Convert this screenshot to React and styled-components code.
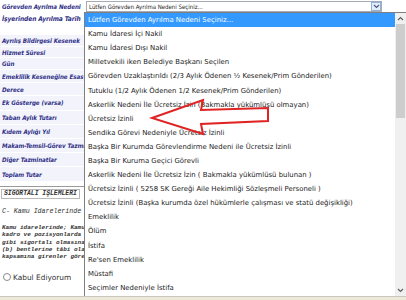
import React from "react";
import styled, { createGlobalStyle } from "styled-components";

const reasons = [
  "Lütfen Görevden Ayrılma Nedeni Seçiniz...",
  "Kamu İdaresi İçi Nakil",
  "Kamu İdaresi Dışı Nakil",
  "Milletvekili iken Belediye Başkanı Seçilen",
  "Görevden Uzaklaştırıldı (2/3 Aylık Ödenen ½ Kesenek/Prim Gönderilen)",
  "Tutuklu (1/2 Aylık Ödenen 1/2 Kesenek/Prim Gönderilen)",
  "Askerlik Nedeni İle Ücretsiz İzin (Bakmakla yükümlüsü olmayan)",
  "Ücretsiz İzinli",
  "Sendika Görevi Nedeniyle Ücretsiz İzinli",
  "Başka Bir Kurumda Görevlendirme Nedeni ile Ücretsiz İzinli",
  "Başka Bir Kuruma Geçici Görevli",
  "Askerlik Nedeni İle Ücretsiz İzin ( Bakmakla yükümlüsü bulunan )",
  "Ücretsiz İzinli ( 5258 SK Gereği Aile Hekimliği Sözleşmeli Personeli )",
  "Ücretsiz İzinli (Başka kurumda özel hükümlerle çalışması ve statü değişikliği)",
  "Emeklilik",
  "Ölüm",
  "İstifa",
  "Re'sen Emeklilik",
  "Müstafi",
  "Seçimler Nedeniyle İstifa",
];

const labels = [
  ["Ayrılış Bildirgesi Kesenek", 12],
  ["Hizmet Süresi", 11],
  ["Gün", 12],
  ["Emeklilik Keseneğine Esas", 13],
  ["Derece", 13],
  ["Ek Gösterge (varsa)", 14.5],
  ["Taban Aylık Tutarı", 14],
  ["Kıdem Aylığı Yıl", 14.3],
  ["Makam-Temsil-Görev Tazminatı", 14.3],
  ["Diğer Tazminatlar", 14.3],
  ["Toplam Tutar", 14.3],
];

const paragraph = [
  "Kamu idarelerinde; Kamu idarelerinde;",
  "kadro ve pozisyonlarda çalışanlardan",
  "gibi sigortalı olmasına rağmen",
  "(b) bentlerine tâbi olanlardan",
  "kapsamına girenler görevden ayrılan",
];

const App = () => (
  <>
    <Global />
    <Page>
      <Form>
        <TopRow>
          <Label>Görevden Ayrılma Nedeni</Label>
          <Select>
            <span>Lütfen Görevden Ayrılma Nedeni Seçiniz...</span>
            <SelectButton>
              <svg width="7" height="5" viewBox="0 0 7 5">
                <path d="M1 1l2.5 2.5L6 1" fill="none" stroke="#4a5a80" strokeWidth="1.2" />
              </svg>
            </SelectButton>
          </Select>
        </TopRow>
        <DateRow>
          <Label big>İşyerinden Ayrılma Tarih</Label>
        </DateRow>
        <Spacer />
        {labels.map(([text, h]) => (
          <Cell key={text} h={h}>
            <Label>{text}</Label>
          </Cell>
        ))}
        <Rule />
        <Section>SİGORTALI İŞLEMLERİ</Section>
        <SubTitle>C- Kamu İdarelerinde Çalışanlar</SubTitle>
        <Para>
          {paragraph.map((line) => (
            <div key={line}>{line}</div>
          ))}
        </Para>
        <Radio>
          <Circle />
          Kabul Ediyorum
        </Radio>
      </Form>
      <Footer />

      <List>
        <Options>
          {reasons.map((r, i) => (
            <Option key={r} selected={i === 0}>
              {r}
            </Option>
          ))}
        </Options>
        <Scrollbar>
          <ScrollArrow>
            <svg width="7" height="5" viewBox="0 0 7 5">
              <path d="M1 4l2.5-2.5L6 4" fill="none" stroke="#606060" strokeWidth="1.2" />
            </svg>
          </ScrollArrow>
          <Thumb />
          <Track />
          <ScrollArrow>
            <svg width="7" height="5" viewBox="0 0 7 5">
              <path d="M1 1l2.5 2.5L6 1" fill="none" stroke="#606060" strokeWidth="1.2" />
            </svg>
          </ScrollArrow>
        </Scrollbar>
      </List>

      <Arrow width="406" height="300" viewBox="0 0 406 300">
        <path
          d="M152 118 L203 100 L201 110 L268 108 L268 121 L201 124 L203 134 Z"
          fill="none"
          stroke="#e02424"
          strokeWidth="2"
          strokeLinejoin="miter"
        />
      </Arrow>
    </Page>
  </>
);

export default App;

const Global = createGlobalStyle`
  body {
    margin: 0;
    background: #fff;
    font-family: "DejaVu Sans", Tahoma, sans-serif;
  }
`;

const Page = styled.div`
  position: relative;
  width: 406px;
  height: 300px;
  overflow: hidden;
  background: #fff;
`;

const Form = styled.div`
  display: flex;
  flex-direction: column;
  height: 296px;
`;

const TopRow = styled.div`
  display: flex;
  align-items: center;
  height: 12px;
  gap: 2px;
`;

const Label = styled.div`
  width: 84px;
  box-sizing: border-box;
  flex: none;
  overflow: hidden;
  white-space: nowrap;
  font-family: "DejaVu Sans Condensed", "DejaVu Sans", Verdana, sans-serif;
  font-stretch: condensed;
  font-weight: bold;
  font-style: italic;
  font-size: ${(p) => (p.big ? "6.6px" : "6.2px")};
  letter-spacing: ${(p) => (p.big ? "-0.1px" : "-0.05px")};
  color: #2f2f86;
  padding-left: 2px;
`;

const Select = styled.div`
  width: 296px;
  height: 11px;
  box-sizing: border-box;
  border: 1px solid #a5acb5;
  display: flex;
  align-items: center;
  justify-content: space-between;
  padding-left: 2px;
  font-family: "DejaVu Sans Condensed", "Liberation Sans Narrow", Arial, sans-serif;
  font-stretch: condensed;
  font-size: 6px;
  color: #222;
  white-space: nowrap;
`;

const SelectButton = styled.div`
  width: 10px;
  height: 9px;
  box-sizing: border-box;
  border: 1px solid #8fb2da;
  background: #e3eefb;
  display: flex;
  align-items: center;
  justify-content: center;
`;

const DateRow = styled.div`
  height: 14px;
  display: flex;
  align-items: center;
`;

const Spacer = styled.div`
  height: 9px;
`;

const Cell = styled.div`
  height: ${(p) => p.h}px;
  display: flex;
  align-items: center;
  background: #f3f4fb;
  border-bottom: 1px solid #fff;
  box-sizing: border-box;
`;

const Rule = styled.div`
  margin-top: 4px;
  height: 1px;
  background: #9a9a9a;
`;

const Section = styled.div`
  margin: 2px 0 0 1px;
  width: 79px;
  height: 10px;
  box-sizing: border-box;
  border: 1px solid #b8b8b8;
  font-family: "Liberation Mono", "Courier New", monospace;
  font-style: italic;
  font-weight: bold;
  font-size: 6.4px;
  color: #333;
  line-height: 8px;
  padding-left: 2px;
  white-space: nowrap;
  overflow: hidden;
`;

const SubTitle = styled.div`
  margin-top: 9px;
  width: 83px;
  overflow: hidden;
  padding-left: 2px;
  font-family: "Liberation Mono", "Courier New", monospace;
  font-style: italic;
  font-size: 6.6px;
  color: #333;
  white-space: nowrap;
`;

const Para = styled.div`
  margin-top: 9px;
  width: 83px;
  overflow: hidden;
  padding-left: 2px;
  font-family: "Liberation Mono", "Courier New", monospace;
  font-style: italic;
  font-weight: bold;
  font-size: 6px;
  line-height: 7.4px;
  color: #333;
  white-space: nowrap;
`;

const Radio = styled.div`
  margin-top: 12px;
  display: flex;
  align-items: center;
  gap: 2px;
  padding-left: 3px;
  font-family: "DejaVu Sans", Verdana, sans-serif;
  font-size: 7.4px;
  color: #333;
`;

const Circle = styled.span`
  width: 8px;
  height: 8px;
  box-sizing: border-box;
  border: 1px solid #8a8a8a;
  border-radius: 50%;
  background: #fff;
`;

const Footer = styled.div`
  height: 4px;
  border-top: 1px solid #c9c6bd;
  background: #ece9d8;
`;

const List = styled.div`
  position: absolute;
  top: 12px;
  left: 84px;
  right: 0;
  bottom: 4px;
  display: flex;
  background: #fff;
  border: 1px solid #7f7f7f;
  border-right: none;
  border-bottom: none;
`;

const Options = styled.div`
  flex: 1;
  display: flex;
  flex-direction: column;
  overflow: hidden;
`;

const Option = styled.div`
  height: 14.1px;
  flex: none;
  display: flex;
  align-items: center;
  padding-left: 3px;
  white-space: nowrap;
  font-family: "DejaVu Sans", Tahoma, sans-serif;
  font-size: 6.9px;
  color: ${(p) => (p.selected ? "#fff" : "#222")};
  background: ${(p) => (p.selected ? "#3399ff" : "transparent")};
`;

const Scrollbar = styled.div`
  width: 11px;
  flex: none;
  display: flex;
  flex-direction: column;
  background: #f0f0f0;
`;

const ScrollArrow = styled.div`
  height: 11px;
  display: flex;
  align-items: center;
  justify-content: center;
`;

const Thumb = styled.div`
  height: 94px;
  margin: 0 1px;
  background: #cdcdcd;
`;

const Track = styled.div`
  flex: 1;
`;

const Arrow = styled.svg`
  position: absolute;
  top: 0;
  left: 0;
  pointer-events: none;
`;
